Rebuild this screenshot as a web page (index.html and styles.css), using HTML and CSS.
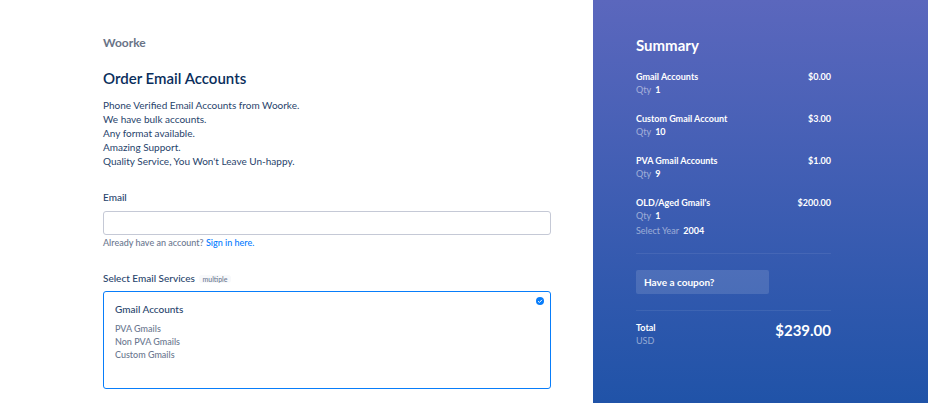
FILE: index.html
```html
<!DOCTYPE html>
<html lang="en">
<head>
<meta charset="utf-8">
<meta name="viewport" content="width=device-width, initial-scale=1">
<title>Order Email Accounts</title>
<link rel="stylesheet" href="styles.css">
</head>
<body>
<div class="page">
  <main class="order">
    <div class="brand">Woorke</div>
    <h1>Order Email Accounts</h1>
    <p class="intro">Phone Verified Email Accounts from Woorke.<br>We have bulk accounts.<br>Any format available.<br>Amazing Support.<br>Quality Service, You Won't Leave Un-happy.</p>
    <form>
      <label class="field-label" for="email">Email</label>
      <input class="text-input" id="email" type="email">
      <p class="hint">Already have an account? <a href="#">Sign in here.</a></p>
      <fieldset>
        <legend>Select Email Services <span class="tag">multiple</span></legend>
        <label class="option">
          <span class="option-body">
            <span class="option-title">Gmail Accounts</span>
            <span class="option-text">PVA Gmails<br>Non PVA Gmails<br>Custom Gmails</span>
          </span>
          <input class="option-input" type="checkbox" checked>
          <svg class="check" viewBox="0 0 16 16" aria-hidden="true"><circle cx="8" cy="8" r="8"/><path d="M4.2 8.4l2.6 2.5 5-5.2"/></svg>
        </label>
      </fieldset>
    </form>
  </main>
  <aside class="summary">
    <h2>Summary</h2>
    <ul class="items">
      <li><div class="row"><span>Gmail Accounts</span><span>$0.00</span></div><div class="meta">Qty <b>1</b></div></li>
      <li><div class="row"><span>Custom Gmail Account</span><span>$3.00</span></div><div class="meta">Qty <b>10</b></div></li>
      <li><div class="row"><span>PVA Gmail Accounts</span><span>$1.00</span></div><div class="meta">Qty <b>9</b></div></li>
      <li><div class="row"><span>OLD/Aged Gmail's</span><span>$200.00</span></div><div class="meta">Qty <b>1</b></div><div class="meta year">Select Year <b>2004</b></div></li>
    </ul>
    <div class="coupon"><button type="button">Have a coupon?</button></div>
    <div class="total">
      <div><div class="total-label">Total</div><div class="currency">USD</div></div>
      <div class="amount">$239.00</div>
    </div>
  </aside>
</div>
</body>
</html>
```
FILE: styles.css
```css
* { box-sizing: border-box; }
body, h1, h2, p, ul, fieldset { margin: 0; padding: 0; }
body {
  font-family: Lato, "Liberation Sans", sans-serif;
  font-size: 10px;
  line-height: 14px;
  color: #27436b;
  background: #fff;
}
.page { display: grid; grid-template-columns: 593fr 335fr; min-height: 100vh; }
.order { padding: 35px 42px 14px 103px; }
.brand { font-size: 12px; line-height: 16px; font-weight: 700; color: #697386; margin-bottom: 17px; }
h1 { font-size: 15px; line-height: 20px; font-weight: 600; color: #0a2e5c; margin-bottom: 10px; }
.intro { margin-bottom: 22px; }
.field-label { display: block; margin-bottom: 7px; font-weight: 500; }
.text-input {
  display: block;
  width: 100%;
  height: 24px;
  padding: 0 8px;
  border: 1px solid #c5c9d6;
  border-radius: 3px;
  font: inherit;
  background: #fff;
}
.hint { font-size: 9px; line-height: 12px; font-weight: 500; color: #6b7890; margin: 2px 0 22px; }
.hint a { color: #007aff; text-decoration: none; }
fieldset { border: 0; min-width: 0; }
legend { padding: 0; margin-bottom: 6px; font-weight: 500; }
.tag {
  margin-left: 2px;
  padding: 0 3px;
  border-radius: 3px;
  font-size: 7px;
  line-height: 10px;
  color: #6b7890;
  background: #f8f9fb;
}
.option {
  display: flex;
  justify-content: space-between;
  min-height: 98px;
  padding: 5px 6px 5px 11px;
  border: 1px solid #087dfa;
  border-radius: 3px;
}
.option-body { padding-top: 5px; }
.option-title, .option-text { display: block; }
.option-title { margin-bottom: 6px; font-weight: 500; }
.option-text { font-size: 9px; line-height: 13px; font-weight: 500; color: #6b7890; }
.option-input { appearance: none; width: 0; height: 0; margin: 0; }
.check { width: 8px; height: 8px; fill: #087dfa; }
.check path { fill: none; stroke: #fff; stroke-width: 2; }
.summary {
  padding: 36px 97px 16px 43px;
  font-size: 9px;
  line-height: 13px;
  color: #fff;
  background: linear-gradient(#5b67bd, #2053a8);
}
h2 { font-size: 15px; line-height: 18px; font-weight: 700; margin-bottom: 16px; }
.items { list-style: none; }
.items li { margin-bottom: 16px; }
.row { display: flex; justify-content: space-between; font-weight: 700; }
.meta, .currency { color: rgba(255, 255, 255, .5); }
.meta b { margin-left: 2px; color: #fff; }
.year { margin-top: 2px; }
.coupon { padding: 16px 0; border: solid rgba(255, 255, 255, .08); border-width: 1px 0; }
.coupon button {
  display: block;
  width: 68%;
  height: 24px;
  padding: 0 8px;
  border: 0;
  border-radius: 2px;
  font: 700 10px/14px Lato, "Liberation Sans", sans-serif;
  color: #fff;
  text-align: left;
  background: rgba(255, 255, 255, .13);
}
.total { display: flex; justify-content: space-between; padding-top: 10px; }
.total-label { font-weight: 700; }
.amount { font-size: 15px; line-height: 18px; font-weight: 700; }
```
